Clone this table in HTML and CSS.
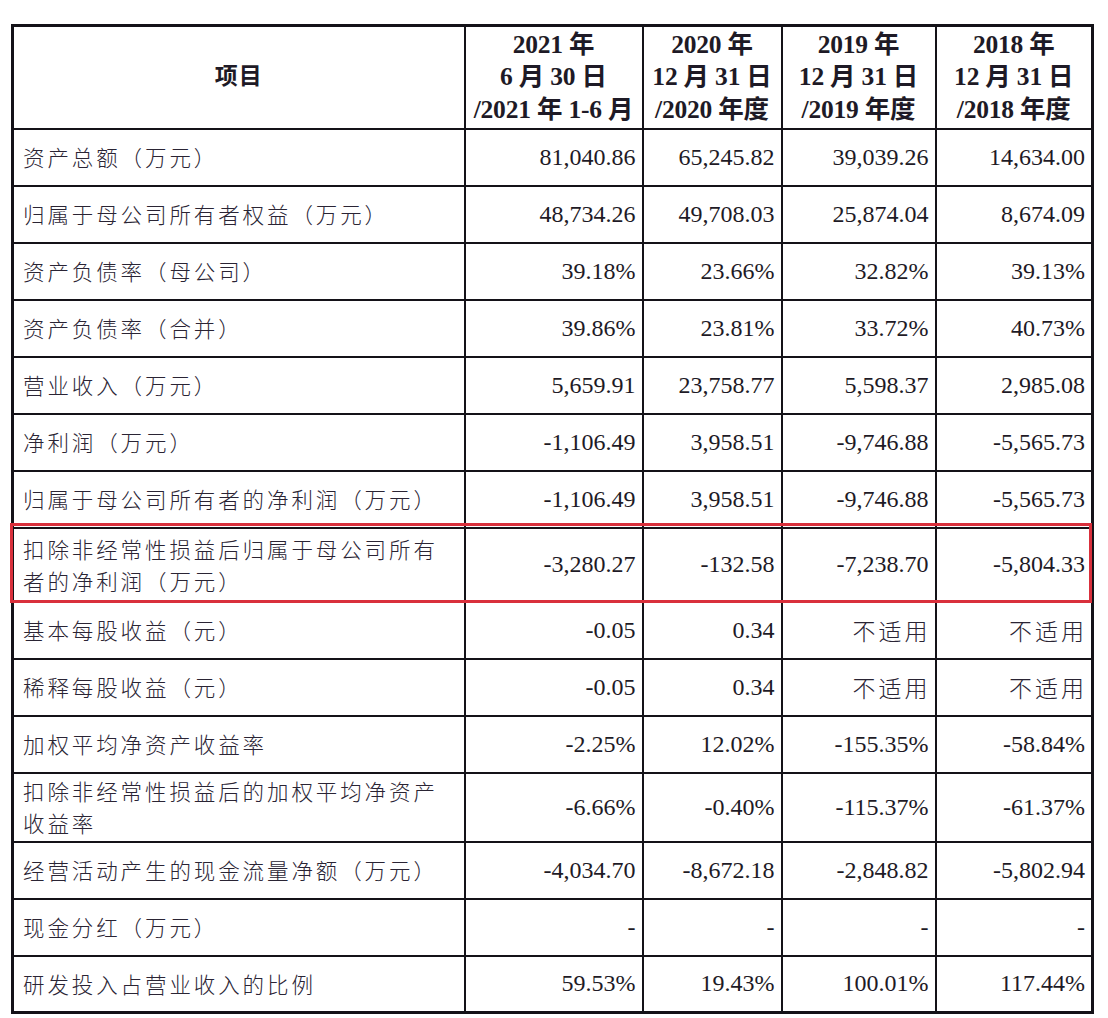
FILE: index.html
```html
<!DOCTYPE html>
<html lang="zh-CN">
<head>
<meta charset="utf-8">
<title>主要财务数据</title>
<link rel="stylesheet" href="styles.css">
</head>
<body>
<div class="page">
  <table class="fin">
    <colgroup>
      <col class="c-item">
      <col class="c-2021">
      <col class="c-2020">
      <col class="c-2019">
      <col class="c-2018">
    </colgroup>
    <thead>
      <tr class="head">
        <th class="h-item">项目</th>
        <th>2021 年<br>6 月 30 日<br>/2021 年 1-6 月</th>
        <th>2020 年<br>12 月 31 日<br>/2020 年度</th>
        <th>2019 年<br>12 月 31 日<br>/2019 年度</th>
        <th>2018 年<br>12 月 31 日<br>/2018 年度</th>
      </tr>
    </thead>
    <tbody>
      <tr><td class="item">资产总额（万元）</td><td>81,040.86</td><td>65,245.82</td><td>39,039.26</td><td>14,634.00</td></tr>
      <tr><td class="item">归属于母公司所有者权益（万元）</td><td>48,734.26</td><td>49,708.03</td><td>25,874.04</td><td>8,674.09</td></tr>
      <tr><td class="item">资产负债率（母公司）</td><td>39.18%</td><td>23.66%</td><td>32.82%</td><td>39.13%</td></tr>
      <tr><td class="item">资产负债率（合并）</td><td>39.86%</td><td>23.81%</td><td>33.72%</td><td>40.73%</td></tr>
      <tr><td class="item">营业收入（万元）</td><td>5,659.91</td><td>23,758.77</td><td>5,598.37</td><td>2,985.08</td></tr>
      <tr><td class="item">净利润（万元）</td><td>-1,106.49</td><td>3,958.51</td><td>-9,746.88</td><td>-5,565.73</td></tr>
      <tr><td class="item">归属于母公司所有者的净利润（万元）</td><td>-1,106.49</td><td>3,958.51</td><td>-9,746.88</td><td>-5,565.73</td></tr>
      <tr class="tall-a"><td class="item">扣除非经常性损益后归属于母公司所有者的净利润（万元）</td><td>-3,280.27</td><td>-132.58</td><td>-7,238.70</td><td>-5,804.33</td></tr>
      <tr><td class="item">基本每股收益（元）</td><td>-0.05</td><td>0.34</td><td class="na">不适用</td><td class="na">不适用</td></tr>
      <tr><td class="item">稀释每股收益（元）</td><td>-0.05</td><td>0.34</td><td class="na">不适用</td><td class="na">不适用</td></tr>
      <tr><td class="item">加权平均净资产收益率</td><td>-2.25%</td><td>12.02%</td><td>-155.35%</td><td>-58.84%</td></tr>
      <tr class="tall-b"><td class="item">扣除非经常性损益后的加权平均净资产收益率</td><td>-6.66%</td><td>-0.40%</td><td>-115.37%</td><td>-61.37%</td></tr>
      <tr><td class="item">经营活动产生的现金流量净额（万元）</td><td>-4,034.70</td><td>-8,672.18</td><td>-2,848.82</td><td>-5,802.94</td></tr>
      <tr><td class="item">现金分红（万元）</td><td>-</td><td>-</td><td>-</td><td>-</td></tr>
      <tr><td class="item">研发投入占营业收入的比例</td><td>59.53%</td><td>19.43%</td><td>100.01%</td><td>117.44%</td></tr>
    </tbody>
  </table>
  <div class="highlight"></div>
</div>
</body>
</html>
```

FILE: styles.css
```css
html, body {
  margin: 0;
  padding: 0;
  background: #ffffff;
}

.page {
  position: relative;
  padding: 24px 0 0 11px;
}

.fin {
  border-collapse: collapse;
  table-layout: fixed;
  width: 1080px;
  border: 3px solid #141218;
  color: #1e1a26;
  font-family: "Liberation Serif", "Noto Sans CJK SC", serif;
  font-size: 24px;
}

.c-item { width: 452px; }
.c-2021 { width: 178px; }
.c-2020 { width: 139px; }
.c-2019 { width: 154px; }
.c-2018 { width: 157px; }

.fin th,
.fin td {
  border: 2px solid #141218;
  padding: 0 6px 0 4px;
  vertical-align: middle;
}

.fin th {
  font-weight: bold;
  text-align: center;
  font-size: 25.5px;
  line-height: 32.5px;
  padding: 0 2px;
  letter-spacing: -0.2px;
  white-space: nowrap;
}

.head { height: 103px; }

.fin th.h-item {
  font-family: "Noto Sans CJK SC", sans-serif;
  font-size: 23px;
  letter-spacing: 1px;
  padding-bottom: 6px;
}

.fin td {
  text-align: right;
  white-space: nowrap;
}

.fin td.na {
  font-family: "Noto Sans CJK SC", sans-serif;
  font-weight: 300;
  font-size: 23px;
  letter-spacing: 3px;
  padding-right: 4px;
  color: #2a2434;
}

.fin tbody tr { height: 57px; }
.fin tbody tr.tall-a { height: 74px; }
.fin tbody tr.tall-b { height: 69px; }

.fin td.item {
  text-align: left;
  white-space: normal;
  font-family: "Noto Sans CJK SC", sans-serif;
  font-weight: 300;
  font-size: 21.5px;
  letter-spacing: 2.9px;
  line-height: 32px;
  padding: 0 4px 0 9px;
  color: #2a2434;
}

.highlight {
  position: absolute;
  left: 10px;
  top: 523px;
  width: 1076px;
  height: 74px;
  border: 3px solid #d9303c;
  pointer-events: none;
}
```
